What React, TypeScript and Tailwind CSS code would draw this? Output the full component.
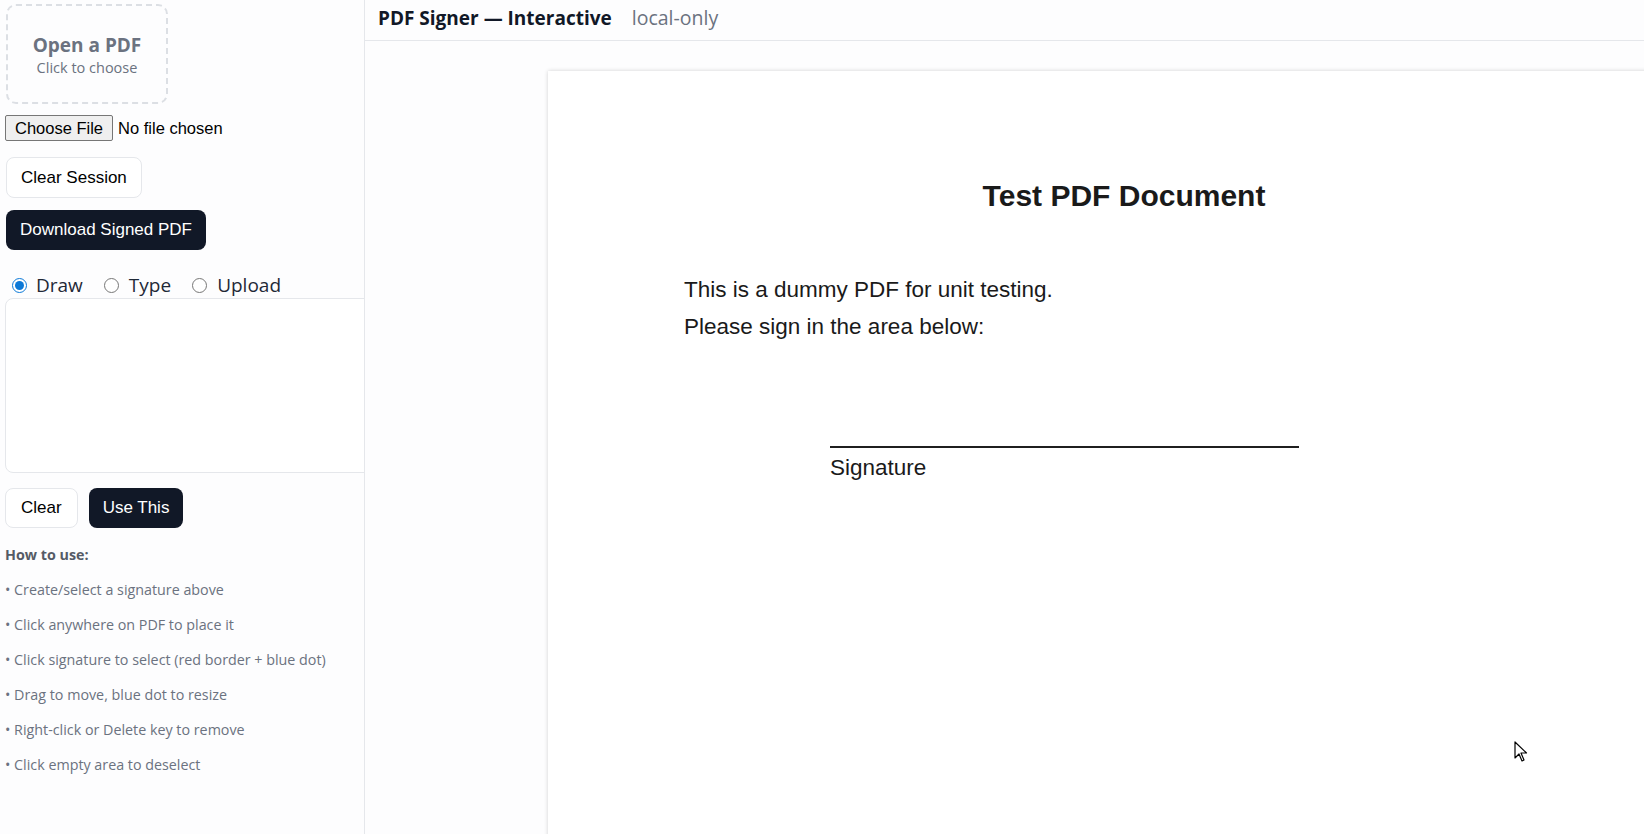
import React from 'react';

const ui = { fontFamily: '"Open Sans", "Noto Sans", sans-serif' };
const arial = { fontFamily: '"Liberation Sans", Arial, sans-serif' };

const TIPS = [
  'Create/select a signature above',
  'Click anywhere on PDF to place it',
  'Click signature to select (red border + blue dot)',
  'Drag to move, blue dot to resize',
  'Right-click or Delete key to remove',
  'Click empty area to deselect',
];

const Sidebar = () => {
  return (
    <aside className="w-[365px] shrink-0 h-full border-r border-[#e5e7eb] overflow-hidden pl-[5px]" style={ui}>
      {/* drop zone */}
      <div className="mt-[4px] ml-[1px] w-[162px] h-[100px] border-2 border-dashed border-[#dcdfe4] rounded-[10px] flex flex-col items-center justify-center">
        <div className="text-[19px] font-bold text-[#6b7280] leading-[24px] mt-[3px]">Open a PDF</div>
        <div className="text-[14.5px] text-[#6b7280] leading-[20px] mt-[1px]">Click to choose</div>
      </div>

      <div className="mt-[11px] flex items-center h-[26px]" style={arial}>
        <span className="h-[26px] px-[9px] flex items-center bg-[#efefef] border border-[#767676] rounded-[2px] text-[16.5px] text-black">
          Choose File
        </span>
        <span className="ml-[5px] text-[16.5px] text-black">No file chosen</span>
      </div>

      <button className="mt-[16px] ml-[1px] h-[41px] px-[14px] border border-[#e5e7eb] rounded-[8px] bg-white text-[17px] text-black block" style={arial}>
        Clear Session
      </button>

      <button className="mt-[12px] ml-[1px] h-[40px] px-[14px] rounded-[8px] bg-[#111827] text-[17px] text-white block" style={arial}>
        Download Signed PDF
      </button>

      <div className="mt-[24px] flex items-center h-[22px] text-[19px] text-[#1f2937]">
        <label className="flex items-center">
          <input type="radio" name="mode" defaultChecked className="ml-[7px] w-[15px] h-[15px] accent-[#0b78d7]" />
          <span className="ml-[9px]">Draw</span>
        </label>
        <label className="flex items-center ml-[21px]">
          <input type="radio" name="mode" className="w-[15px] h-[15px]" />
          <span className="ml-[10px]">Type</span>
        </label>
        <label className="flex items-center ml-[21px]">
          <input type="radio" name="mode" className="w-[15px] h-[15px]" />
          <span className="ml-[10px]">Upload</span>
        </label>
      </div>

      {/* signature pad */}
      <div className="mt-[2px] w-[420px] h-[175px] border border-[#e5e7eb] rounded-[8px] bg-white" />

      <div className="mt-[15px] flex gap-[11px]" style={arial}>
        <button className="h-[40px] px-[15px] border border-[#e5e7eb] rounded-[8px] bg-white text-[17px] text-black">Clear</button>
        <button className="h-[40px] px-[14px] rounded-[8px] bg-[#111827] text-[17px] text-white">Use This</button>
      </div>

      <div className="mt-[17px] text-[14.3px] font-bold text-[#555b66] leading-[20px]">How to use:</div>
      <ul className="mt-[7px] text-[14.3px] text-[#6b7280]">
        {TIPS.map((t) => (
          <li key={t} className="leading-[20px] py-[7.5px]">• {t}</li>
        ))}
      </ul>
    </aside>
  );
};

const PdfPage = () => {
  return (
    <div className="ml-[183px] mt-[30px] w-[1152px] h-[1491px] shrink-0 bg-white shadow-[0_0_4px_rgba(0,0,0,0.18)] text-[#1a1a1a]" style={arial}>
      <div className="pt-[107px] text-center text-[30px] font-bold leading-[36px]">Test PDF Document</div>
      <div className="mt-[57px] pl-[136px] text-[22.5px] leading-[37px]">
        <div>This is a dummy PDF for unit testing.</div>
        <div>Please sign in the area below:</div>
      </div>
      <div className="mt-[101px] ml-[282px] w-[469px] h-[2px] bg-[#1f1f1f]" />
      <div className="mt-[7px] ml-[282px] text-[22.5px] leading-[26px]">Signature</div>
    </div>
  );
};

export default function App() {
  return (
    <div className="relative w-[1644px] h-[834px] flex bg-[#fdfdfe] overflow-hidden">
      <Sidebar />
      <main className="flex-1 flex flex-col overflow-hidden">
        <header className="h-[41px] shrink-0 border-b border-[#e5e7eb] flex items-center pl-[13px] pb-[4px] gap-[20px]" style={ui}>
          <span className="text-[19px] font-bold text-[#111827]">PDF Signer — Interactive</span>
          <span className="text-[19.5px] text-[#6b7280]">local-only</span>
        </header>
        <div className="flex-1 overflow-hidden">
          <PdfPage />
        </div>
      </main>

      {/* mouse pointer */}
      <svg className="absolute left-[1514px] top-[741px]" width="14" height="22" viewBox="0 0 14 22">
        <path d="M1 1 L1 17 L5 13 L8 20 L10 19 L7 12 L12.5 12 Z" fill="white" stroke="black" strokeWidth="1.2" strokeLinejoin="round" />
      </svg>
    </div>
  );
}
